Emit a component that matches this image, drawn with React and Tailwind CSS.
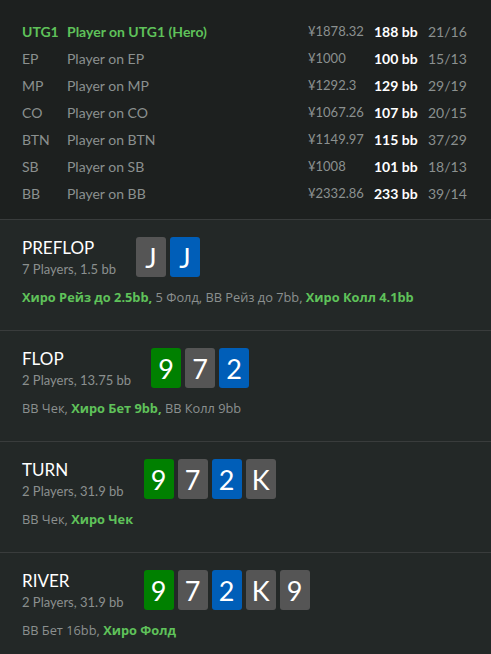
const players = [
  { pos: 'UTG1', name: 'Player on UTG1 (Hero)', stack: '¥1878.32', bb: '188 bb', ratio: '21/16', hero: true },
  { pos: 'EP', name: 'Player on EP', stack: '¥1000', bb: '100 bb', ratio: '15/13' },
  { pos: 'MP', name: 'Player on MP', stack: '¥1292.3', bb: '129 bb', ratio: '29/19' },
  { pos: 'CO', name: 'Player on CO', stack: '¥1067.26', bb: '107 bb', ratio: '20/15' },
  { pos: 'BTN', name: 'Player on BTN', stack: '¥1149.97', bb: '115 bb', ratio: '37/29' },
  { pos: 'SB', name: 'Player on SB', stack: '¥1008', bb: '101 bb', ratio: '18/13' },
  { pos: 'BB', name: 'Player on BB', stack: '¥2332.86', bb: '233 bb', ratio: '39/14' },
]

const cardColors = {
  green: 'bg-[#008000]',
  gray: 'bg-[#555555]',
  blue: 'bg-[#005eb8]',
}

const streets = [
  {
    title: 'PREFLOP',
    info: '7 Players, 1.5 bb',
    cards: [['J', 'gray'], ['J', 'blue']],
    actions: [
      ['Хиро Рейз до 2.5bb,', true],
      ['5 Фолд, BB Рейз до 7bb,', false],
      ['Хиро Колл 4.1bb', true],
    ],
  },
  {
    title: 'FLOP',
    info: '2 Players, 13.75 bb',
    cards: [['9', 'green'], ['7', 'gray'], ['2', 'blue']],
    actions: [
      ['BB Чек,', false],
      ['Хиро Бет 9bb,', true],
      ['BB Колл 9bb', false],
    ],
  },
  {
    title: 'TURN',
    info: '2 Players, 31.9 bb',
    cards: [['9', 'green'], ['7', 'gray'], ['2', 'blue'], ['K', 'gray']],
    actions: [
      ['BB Чек,', false],
      ['Хиро Чек', true],
    ],
  },
  {
    title: 'RIVER',
    info: '2 Players, 31.9 bb',
    cards: [['9', 'green'], ['7', 'gray'], ['2', 'blue'], ['K', 'gray'], ['9', 'gray']],
    actions: [
      ['BB Бет 16bb,', false],
      ['Хиро Фолд', true],
    ],
  },
]

function Card({ rank, color }) {
  return (
    <div
      className={`w-[30px] h-[40px] rounded-[3px] flex items-center justify-center text-white text-[27px] leading-none ${cardColors[color]}`}
    >
      {rank}
    </div>
  )
}

function App() {
  return (
    <div className="min-h-screen bg-[#232827] font-['Lato',sans-serif]">
      {/* players table */}
      <div className="bg-[#1d201f] pt-[18px] pb-3 px-[22px] border-b border-[#393c3c]">
        {players.map((p) => (
          <div key={p.pos} className="flex items-center h-[27px] text-[14px]">
            <div className={`w-[45px] ${p.hero ? 'font-bold text-[#5fc25a]' : 'text-[#8b908f]'}`}>{p.pos}</div>
            <div className={`flex-1 ${p.hero ? 'font-bold text-[#5fc25a]' : 'text-[#8b908f]'}`}>{p.name}</div>
            <div className="w-[66px] text-[13px] text-[#8b908f]">{p.stack}</div>
            <div className="w-[54px] font-bold text-white">{p.bb}</div>
            <div className="w-[41px] text-[#8b908f]">{p.ratio}</div>
          </div>
        ))}
      </div>

      {/* streets */}
      {streets.map((s) => (
        <div key={s.title} className="px-[22px] pt-4 pb-6 border-b border-[#393c3c] last:border-b-0">
          <div className="flex items-center gap-5">
            <div>
              <div className="text-white text-[17px] leading-6">{s.title}</div>
              <div className="text-[#8b908f] text-[13px] leading-[18px]">{s.info}</div>
            </div>
            <div className="flex gap-1">
              {s.cards.map((c, i) => (
                <Card key={i} rank={c[0]} color={c[1]} />
              ))}
            </div>
          </div>
          <div className="mt-2.5 font-['Open_Sans',sans-serif] text-[12.8px] leading-[18px] text-[#8b908f]">
            {s.actions.map((a, i) => (
              <span key={i} className={a[1] ? 'font-bold text-[#5fc25a]' : ''}>
                {i > 0 ? ' ' : ''}
                {a[0]}
              </span>
            ))}
          </div>
        </div>
      ))}
    </div>
  )
}

export default App
